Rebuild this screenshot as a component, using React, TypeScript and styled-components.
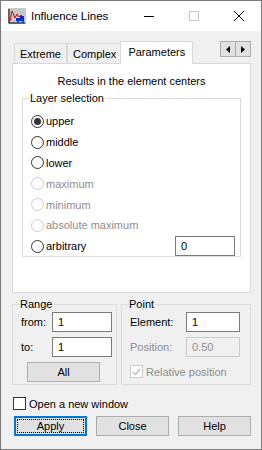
import React, { useState } from 'react'
import styled, { createGlobalStyle, css } from 'styled-components'

const GlobalStyle = createGlobalStyle`
  html, body {
    margin: 0;
    padding: 0;
    background: #f0f0f0;
  }
  * {
    box-sizing: border-box;
  }
`

const font = `"Liberation Sans", Arial, sans-serif`

const Window = styled.div`
  width: 262px;
  height: 450px;
  border: 1px solid #7a7a7a;
  background: #f0f0f0;
  font-family: ${font};
  font-size: 11px;
  color: #000;
  display: flex;
  flex-direction: column;
  overflow: hidden;
`

const TitleBar = styled.div`
  height: 30px;
  background: #fff;
  display: flex;
  align-items: center;
  padding-left: 7px;
  flex-shrink: 0;
`

const TitleText = styled.span`
  font-size: 11.5px;
  margin-left: 5px;
  flex: 1;
`

const Caption = styled.div<{ $disabled?: boolean }>`
  width: 45px;
  height: 30px;
  display: flex;
  align-items: center;
  justify-content: center;
  color: ${p => (p.$disabled ? '#c8c8c8' : '#000')};
`

const Body = styled.div`
  flex: 1;
  display: flex;
  flex-direction: column;
  padding: 9px 10px 0 11px;
`

const TabStrip = styled.div`
  height: 23px;
  display: flex;
  align-items: flex-end;
  padding-left: 2px;
  position: relative;
`

const Tab = styled.div<{ $active?: boolean }>`
  height: 20px;
  padding: 0 5px;
  display: flex;
  align-items: center;
  border: 1px solid #d9d9d9;
  border-bottom: none;
  background: #f0f0f0;
  font-size: 11px;
  ${p =>
    p.$active &&
    css`
      height: 23px;
      background: #fff;
      margin: 0 -2px -1px;
      padding: 0 7px 3px;
      position: relative;
      z-index: 1;
    `}
`

const ScrollArrows = styled.div`
  position: absolute;
  right: 0;
  top: 1px;
  display: flex;
`

const ArrowBtn = styled.div`
  width: 16px;
  height: 16px;
  border: 1px solid #adadad;
  background: #e1e1e1;
  display: flex;
  align-items: center;
  justify-content: center;
  & + & {
    margin-left: -1px;
  }
`

const TabPanel = styled.div`
  height: 230px;
  background: #fff;
  border: 1px solid #d9d9d9;
  display: flex;
  flex-direction: column;
  padding: 11px 9px 0 9px;
`

const Heading = styled.div`
  text-align: center;
  font-size: 11px;
  margin-bottom: 5px;
`

const GroupBox = styled.fieldset<{ $width?: string; $height?: string; $padRight?: string }>`
  margin: 0;
  border: 1px solid #dcdcdc;
  padding: 0 ${p => p.$padRight || '8px'} 0 8px;
  width: ${p => p.$width || 'auto'};
  height: ${p => p.$height || 'auto'};
  display: flex;
  flex-direction: column;
  legend {
    padding: 0 1px;
    margin-left: -2px;
    font-size: 11px;
  }
`

const RadioRow = styled.label<{ $disabled?: boolean }>`
  height: 20.8px;
  display: flex;
  align-items: center;
  font-size: 11px;
  color: ${p => (p.$disabled ? '#8d8d8d' : '#000')};
  gap: 1px;
`

const RadioCircle = styled.span<{ $checked?: boolean; $disabled?: boolean }>`
  width: 13px;
  height: 13px;
  border-radius: 50%;
  border: 1px solid ${p => (p.$disabled ? '#cccccc' : '#333')};
  background: #fff;
  display: inline-flex;
  align-items: center;
  justify-content: center;
  margin-right: 1px;
  &::after {
    content: '';
    width: 7px;
    height: 7px;
    border-radius: 50%;
    background: #333;
    display: ${p => (p.$checked ? 'block' : 'none')};
  }
`

const Spacer = styled.div<{ $h?: number }>`
  flex: ${p => (p.$h ? 'none' : 1)};
  height: ${p => (p.$h ? `${p.$h}px` : 'auto')};
`

const TextInput = styled.div<{ $width: string; $disabled?: boolean }>`
  width: ${p => p.$width};
  height: 20px;
  border: 1px solid ${p => (p.$disabled ? '#cccccc' : '#7a7a7a')};
  background: ${p => (p.$disabled ? '#f0f0f0' : '#fff')};
  color: ${p => (p.$disabled ? '#8d8d8d' : '#000')};
  display: flex;
  align-items: center;
  padding-left: 5px;
  font-size: 11px;
`

const LowerRow = styled.div`
  display: flex;
  gap: 4px;
  margin-top: 5px;
`

const FieldRow = styled.div<{ $disabled?: boolean }>`
  display: flex;
  align-items: center;
  justify-content: space-between;
  font-size: 11px;
  color: ${p => (p.$disabled ? '#8d8d8d' : '#000')};
  margin-top: 5px;
  &:first-of-type {
    margin-top: 2px;
  }
`

const Centered = styled.div`
  display: flex;
  justify-content: center;
  margin-top: 5px;
  padding-right: 6px;
`

const PushButton = styled.div<{ $focused?: boolean }>`
  width: 73px;
  height: 20px;
  border: 1px solid #adadad;
  background: #e1e1e1;
  display: flex;
  align-items: center;
  justify-content: center;
  font-size: 11px;
  position: relative;
  ${p =>
    p.$focused &&
    css`
      border: 2px solid #0078d7;
      &::after {
        content: '';
        position: absolute;
        inset: 1px;
        border: 1px dotted #000;
      }
    `}
`

const CheckLine = styled.div<{ $top: number; $left: number }>`
  margin-top: ${p => p.$top}px;
  padding-left: ${p => p.$left}px;
`

const CheckRow = styled.label<{ $disabled?: boolean }>`
  display: flex;
  align-items: center;
  gap: 3px;
  font-size: 11px;
  color: ${p => (p.$disabled ? '#8d8d8d' : '#000')};
`

const CheckBox = styled.span<{ $disabled?: boolean }>`
  width: 13px;
  height: 13px;
  border: 1px solid ${p => (p.$disabled ? '#cccccc' : '#333')};
  background: #fff;
  display: inline-flex;
  align-items: center;
  justify-content: center;
`

const ButtonRow = styled.div`
  display: flex;
  justify-content: space-between;
  margin-top: 6px;
  padding-left: 2px;
`

const AppIcon = () => (
  <svg width="18" height="16" viewBox="0 0 18 16">
    <rect x="0" y="0" width="18" height="16" fill="#c8c8c8" />
    <path d="M1 1 V15 H17" stroke="#000" strokeWidth="1" fill="none" />
    <path d="M2 13 L4 3 L7 10 L9 6 L11 9 L13 7 L16 10" stroke="#e00000" strokeWidth="1" fill="none" />
    <rect x="8" y="10" width="8" height="3" fill="#0030d0" />
    <rect x="12" y="8" width="4" height="3" fill="#0030d0" />
    <circle cx="10" cy="14" r="1" fill="#0030d0" />
    <circle cx="15" cy="14" r="1" fill="#0030d0" />
  </svg>
)

const layers = [
  { label: 'upper' },
  { label: 'middle' },
  { label: 'lower' },
  { label: 'maximum', disabled: true },
  { label: 'minimum', disabled: true },
  { label: 'absolute maximum', disabled: true }
]

export default function App() {
  const [layer] = useState('upper')

  return (
    <>
      <GlobalStyle />
      <Window>
        <TitleBar>
          <AppIcon />
          <TitleText>Influence Lines</TitleText>
          <Caption>
            <svg width="10" height="10" viewBox="0 0 10 10">
              <path d="M0 5.5 H10" stroke="#000" strokeWidth="1" />
            </svg>
          </Caption>
          <Caption $disabled>
            <svg width="10" height="10" viewBox="0 0 10 10">
              <rect x="0.5" y="0.5" width="9" height="9" stroke="currentColor" fill="none" />
            </svg>
          </Caption>
          <Caption>
            <svg width="10" height="10" viewBox="0 0 10 10">
              <path d="M0 0 L10 10 M10 0 L0 10" stroke="#000" strokeWidth="1" />
            </svg>
          </Caption>
        </TitleBar>
        <Body>
          <TabStrip>
            <Tab>Extreme</Tab>
            <Tab>Complex</Tab>
            <Tab $active>Parameters</Tab>
            <ScrollArrows>
              <ArrowBtn>
                <svg width="4" height="7" viewBox="0 0 4 7">
                  <path d="M4 0 V7 L0 3.5 Z" fill="#000" />
                </svg>
              </ArrowBtn>
              <ArrowBtn>
                <svg width="4" height="7" viewBox="0 0 4 7">
                  <path d="M0 0 V7 L4 3.5 Z" fill="#000" />
                </svg>
              </ArrowBtn>
            </ScrollArrows>
          </TabStrip>
          <TabPanel>
            <Heading>Results in the element centers</Heading>
            <GroupBox $height="165px" $padRight="5px">
              <legend>Layer selection</legend>
              <Spacer $h={7} />
              {layers.map(l => (
                <RadioRow key={l.label} $disabled={l.disabled}>
                  <RadioCircle $checked={layer === l.label} $disabled={l.disabled} />
                  {l.label}
                </RadioRow>
              ))}
              <RadioRow>
                <RadioCircle />
                arbitrary
                <Spacer />
                <TextInput $width="60px">0</TextInput>
              </RadioRow>
            </GroupBox>
          </TabPanel>
          <LowerRow>
            <GroupBox $width="105px" $height="87px" $padRight="4px">
              <legend>Range</legend>
              <FieldRow>
                from:
                <TextInput $width="60px">1</TextInput>
              </FieldRow>
              <FieldRow>
                to:
                <TextInput $width="60px">1</TextInput>
              </FieldRow>
              <Centered>
                <PushButton>All</PushButton>
              </Centered>
            </GroupBox>
            <GroupBox $width="130px" $height="87px" $padRight="10px">
              <legend>Point</legend>
              <FieldRow>
                Element:
                <TextInput $width="54px">1</TextInput>
              </FieldRow>
              <FieldRow $disabled>
                Position:
                <TextInput $width="54px" $disabled>0.50</TextInput>
              </FieldRow>
              <CheckLine $top={8} $left={0}>
                <CheckRow $disabled>
                  <CheckBox $disabled>
                    <svg width="9" height="8" viewBox="0 0 9 8">
                      <path d="M1 4 L3.5 6.5 L8 1" stroke="#bdbdbd" strokeWidth="1.3" fill="none" />
                    </svg>
                  </CheckBox>
                  Relative position
                </CheckRow>
              </CheckLine>
            </GroupBox>
          </LowerRow>
          <CheckLine $top={12} $left={1}>
            <CheckRow>
              <CheckBox />
              Open a new window
            </CheckRow>
          </CheckLine>
          <ButtonRow>
            <PushButton $focused>Apply</PushButton>
            <PushButton>Close</PushButton>
            <PushButton>Help</PushButton>
          </ButtonRow>
        </Body>
      </Window>
    </>
  )
}
